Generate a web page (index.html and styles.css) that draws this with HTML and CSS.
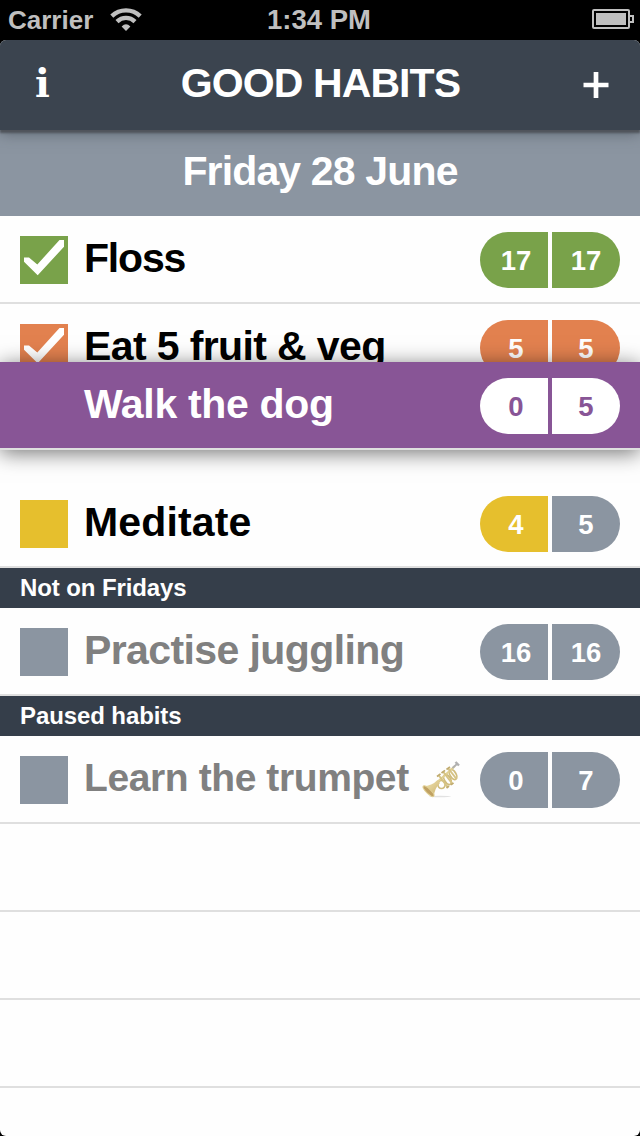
FILE: index.html
```html
<!DOCTYPE html>
<html lang="en">
<head>
<meta charset="utf-8">
<title>Good Habits</title>
<link rel="stylesheet" href="styles.css">
</head>
<body>
<div class="phone">
  <header class="status">
    <div class="status-left">
      <span class="carrier">Carrier</span>
      <svg class="wifi" width="32" height="24" viewBox="0 0 32 24">
        <path d="M1.8 8.1A20.5 20.5 0 0 1 30.2 8.1" fill="none" stroke="#bfbfbf" stroke-width="4.300"/>
        <path d="M7 13.600A12.8 12.8 0 0 1 25 13.600" fill="none" stroke="#bfbfbf" stroke-width="4.300"/>
        <path d="M16 23L11.600 18.500Q16 13.800 20.400 18.500Z" fill="#bfbfbf"/>
      </svg>
    </div>
    <span class="time">1:34 PM</span>
    <svg class="battery" width="42" height="20" viewBox="0 0 42 20">
      <rect x="1" y="1" width="36" height="18" rx="1" fill="none" stroke="#bfbfbf" stroke-width="2"/>
      <rect x="4" y="4" width="30" height="12" fill="#bfbfbf"/>
      <path d="M38 7H41V13H38" fill="none" stroke="#bfbfbf" stroke-width="2"/>
    </svg>
  </header>
  <main class="app">
    <nav class="navbar">
      <span class="info">i</span>
      <h1 class="title">GOOD HABITS</h1>
      <svg class="add" width="26" height="28" viewBox="0 0 26 28">
        <path d="M0.5 14H25.5M13 1V27" stroke="#fff" stroke-width="4.700" fill="none"/>
      </svg>
    </nav>
    <h2 class="date">Friday 28 June</h2>
    <section class="list">
      <div class="row green">
        <span class="box"><svg width="48" height="48" viewBox="0 0 48 48"><path d="M4 21.5H9L17.3 28.5L39.5 4H44V10.7L17.7 39.3L4 25.7Z" fill="#fff"/></svg></span>
        <span class="name floss">Floss</span>
        <span class="badge"><b class="count">17</b><b class="count">17</b></span>
      </div>
      <div class="row orange">
        <span class="box"><svg width="48" height="48" viewBox="0 0 48 48"><path d="M4 21.5H9L17.3 28.5L39.5 4H44V10.7L17.7 39.3L4 25.7Z" fill="#fff"/></svg></span>
        <span class="name fruit">Eat 5 fruit &amp; veg</span>
        <span class="badge"><b class="count">5</b><b class="count">5</b></span>
      </div>
      <div class="slot">
        <div class="row dragged">
          <span class="box"></span>
          <span class="name walk">Walk the dog</span>
          <span class="badge"><b class="count">0</b><b class="count">5</b></span>
        </div>
      </div>
      <div class="row yellow">
        <span class="box"></span>
        <span class="name meditate">Meditate</span>
        <span class="badge"><b class="count">4</b><b class="count rest">5</b></span>
      </div>
      <h3 class="section">Not on Fridays</h3>
      <div class="row muted">
        <span class="box"></span>
        <span class="name juggling">Practise juggling</span>
        <span class="badge"><b class="count">16</b><b class="count">16</b></span>
      </div>
      <h3 class="section">Paused habits</h3>
      <div class="row muted">
        <span class="box"></span>
        <span class="name learn">Learn the trumpet</span>
        <svg class="trumpet" width="40" height="40" viewBox="0 0 40 40">
          <defs>
            <linearGradient id="brass" x1="0" y1="0" x2="1" y2="1">
              <stop offset="0" stop-color="#f3e8b8"/>
              <stop offset="1" stop-color="#cbb06a"/>
            </linearGradient>
          </defs>
          <ellipse cx="19" cy="35.500" rx="11" ry="0.800" fill="#e2e2e2"/>
          <g fill="none" stroke="#d0bc7c" stroke-width="1.700">
            <ellipse cx="20.500" cy="23.500" rx="3.600" ry="4"/>
            <ellipse cx="26.500" cy="18.500" rx="3" ry="5.600" transform="rotate(-30 26.500 18.500)"/>
            <ellipse cx="32" cy="13.500" rx="3" ry="5.600" transform="rotate(-30 32 13.500)"/>
          </g>
          <path d="M13 24L34 5" stroke="#e0d093" stroke-width="2"/>
          <path d="M17.500 14L27 26.500M22 10.500L31.500 23M27 7L35.500 18" stroke="#d6c384" stroke-width="2"/>
          <path d="M16 15.500L19.500 12.800M20.500 12L24 9.300M25.500 8.500L29 5.800M25.500 27L28 25M30 23.800L32.500 21.800" stroke="#c0ab70" stroke-width="1.700"/>
          <path d="M2 25Q11 25 16.500 19L19 22Q13 28 13 35.500Z" fill="url(#brass)"/>
          <ellipse cx="7.500" cy="30.200" rx="7.300" ry="2.200" transform="rotate(44 7.500 30.200)" fill="#c0a162" stroke="#e0cf92" stroke-width="1"/>
          <path d="M31.500 7L36 3" stroke="#b0b0b0" stroke-width="1.700"/>
          <path d="M34.500 1L38 4.500" stroke="#b0b0b0" stroke-width="2.400"/>
        </svg>
        <span class="badge"><b class="count">0</b><b class="count">7</b></span>
      </div>
      <div class="row"></div>
      <div class="row"></div>
      <div class="row"></div>
    </section>
  </main>
</div>
</body>
</html>
```
FILE: styles.css
```css
* { box-sizing: border-box; margin: 0; }
body {
  background: #000;
  font-family: "Liberation Sans", Arial, sans-serif;
  font-weight: bold;
}
.phone {
  width: 640px;
  height: 1136px;
  display: flex;
  flex-direction: column;
  overflow: hidden;
}
.status {
  height: 40px;
  flex: none;
  display: grid;
  grid-template-columns: 1fr auto 1fr;
  align-items: center;
  padding: 0 6px 0 8px;
  color: #bfbfbf;
}
.status-left { display: flex; align-items: center; gap: 17px; }
.carrier { font-size: 26px; line-height: 40px; }
.time { font-size: 27.500px; line-height: 40px; margin: 0 4px 0 0; }
.battery { justify-self: end; margin-bottom: 2px; }
.app {
  flex: 1;
  min-height: 0;
  display: flex;
  flex-direction: column;
  background: #fefefe;
  border-radius: 6px;
  overflow: hidden;
}
.navbar {
  height: 90px;
  flex: none;
  display: grid;
  grid-template-columns: 1fr auto 1fr;
  align-items: center;
  padding: 0 31px 4px 35px;
  background: #3b444f;
  color: #fff;
  box-shadow: 0 3px 2px #50545b, 0 3px 14px rgba(60, 68, 79, .6);
  z-index: 1;
}
.info { font: bold 39px/86px "DejaVu Serif", serif; }
.title { font-size: 41px; line-height: 86px; letter-spacing: -.9px; margin-right: 3px; }
.add { justify-self: end; margin-top: 4px; }
.date {
  height: 86px;
  flex: none;
  background: #8b95a1;
  color: #fff;
  font-size: 41px;
  letter-spacing: -.85px;
  line-height: 83px;
  text-align: center;
}
.list { flex: none; }
.row {
  --tint: #8b95a1;
  height: 88px;
  display: flex;
  align-items: center;
  padding: 0 20px;
  border-bottom: 2px solid #dfdfdf;
  color: #000;
}
.green { --tint: #79a24a; }
.orange { --tint: #e2814f; }
.yellow { --tint: #e6bf2d; }
.muted { color: #808080; }
.box {
  width: 48px;
  height: 48px;
  margin: 2px 16px 0 0;
  background: var(--tint);
}
.box svg { display: block; }
.name { font-size: 41px; line-height: 84px; margin-bottom: 2px; white-space: nowrap; }
.floss { letter-spacing: -1.2px; }
.fruit { letter-spacing: -.62px; }
.walk { letter-spacing: -.33px; }
.meditate { letter-spacing: .15px; }
.juggling { letter-spacing: -.6px; }
.learn { font-size: 39px; letter-spacing: -.4px; }
.badge {
  display: flex;
  gap: 4px;
  width: 140px;
  height: 56px;
  margin: 2px 0 0 auto;
  border-radius: 28px;
  overflow: hidden;
}
.count {
  width: 68px;
  background: var(--tint);
  color: #fff;
  font-size: 27.500px;
  line-height: 58px;
  text-align: center;
  padding-left: 4px;
}
.count + .count { padding-left: 0; }
.rest { background: #8b95a1; }
.slot { height: 88px; position: relative; }
.dragged {
  position: absolute;
  top: -30px;
  left: 0;
  width: 100%;
  background: #885596;
  color: #fff;
  box-shadow: 0 3px 20px rgba(0, 0, 0, .55);
}
.dragged .box { background: transparent; }
.dragged .count { background: #fff; color: #885596; }
.section {
  height: 40px;
  padding-left: 20px;
  background: #353e4a;
  color: #fff;
  font-size: 24px;
  letter-spacing: -.1px;
  line-height: 40px;
}
.trumpet { margin: 4px 0 0 12px; }
```
